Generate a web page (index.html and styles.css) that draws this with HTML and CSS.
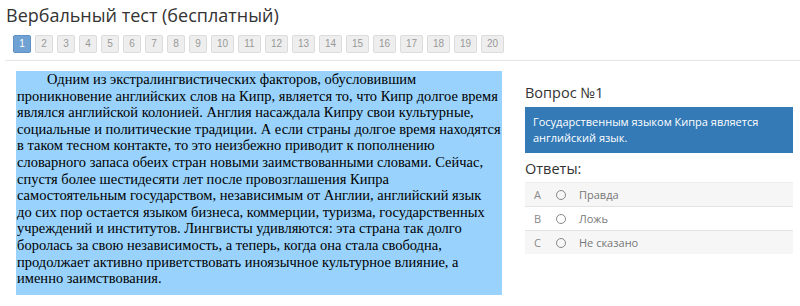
FILE: index.html
```html
<!DOCTYPE html>
<html lang="ru">
<head>
    <meta charset="UTF-8">
    <title>Вербальный тест (бесплатный)</title>
    <link rel="stylesheet" href="styles.css">
</head>
<body>
    <h1 class="title">Вербальный тест (бесплатный)</h1>

    <!-- номера вопросов -->
    <div class="pager">
        <span class="page-num current">1</span>
        <span class="page-num">2</span>
        <span class="page-num">3</span>
        <span class="page-num">4</span>
        <span class="page-num">5</span>
        <span class="page-num">6</span>
        <span class="page-num">7</span>
        <span class="page-num">8</span>
        <span class="page-num">9</span>
        <span class="page-num wide">10</span>
        <span class="page-num wide">11</span>
        <span class="page-num wide">12</span>
        <span class="page-num wide">13</span>
        <span class="page-num wide">14</span>
        <span class="page-num wide">15</span>
        <span class="page-num wide">16</span>
        <span class="page-num wide">17</span>
        <span class="page-num wide">18</span>
        <span class="page-num wide">19</span>
        <span class="page-num wide">20</span>
    </div>
    <div class="divider"></div>

    <div class="main">
        <!-- текст задания (переносы как в оригинале) -->
        <div class="passage">
            <p>Одним из экстралингвистических факторов, обусловившим<br>
            проникновение английских слов на Кипр, является то, что Кипр долгое время<br>
            являлся английской колонией. Англия насаждала Кипру свои культурные,<br>
            социальные и политические традиции. А если страны долгое время находятся<br>
            в таком тесном контакте, то это неизбежно приводит к пополнению<br>
            словарного запаса обеих стран новыми заимствованными словами. Сейчас,<br>
            спустя более шестидесяти лет после провозглашения Кипра<br>
            самостоятельным государством, независимым от Англии, английский язык<br>
            до сих пор остается языком бизнеса, коммерции, туризма, государственных<br>
            учреждений и институтов. Лингвисты удивляются: эта страна так долго<br>
            боролась за свою независимость, а теперь, когда она стала свободна,<br>
            продолжает активно приветствовать иноязычное культурное влияние, а<br>
            именно заимствования.</p>
        </div>

        <!-- вопрос и ответы -->
        <div class="side">
            <h3 class="question-title">Вопрос №1</h3>
            <div class="question-box">Государственным языком Кипра является английский язык.</div>
            <h3 class="answers-title">Ответы:</h3>
            <div class="answers">
                <label class="answer">
                    <span class="letter">A</span>
                    <span class="radio"></span>
                    <span class="answer-text">Правда</span>
                </label>
                <label class="answer">
                    <span class="letter">B</span>
                    <span class="radio"></span>
                    <span class="answer-text">Ложь</span>
                </label>
                <label class="answer">
                    <span class="letter">C</span>
                    <span class="radio"></span>
                    <span class="answer-text">Не сказано</span>
                </label>
            </div>
        </div>
    </div>
</body>
</html>
```

FILE: styles.css
```css
body {
    font-family: 'Open Sans', 'Noto Sans', sans-serif;
    background: white;
    color: #333;
    margin: 0;
}

.title {
    font-size: 18px;
    font-weight: normal;
    line-height: 24px;
    margin: 0;
    padding: 3px 0 0 6px;
}

.pager {
    display: flex;
    gap: 4px;
    margin: 8px 0 0 13px;
}

.page-num {
    box-sizing: border-box;
    width: 18px;
    height: 18px;
    border: 1px solid #dcdcdc;
    border-radius: 2px;
    background: #eee;
    color: #999;
    font-family: 'Liberation Sans', Arial, sans-serif;
    font-size: 10px;
    line-height: 16px;
    text-align: center;
}

.page-num.wide {
    width: 23px;
}

.page-num.current {
    background: #6fa1d3;
    border-color: #5f93c7;
    color: white;
}

.divider {
    border-top: 1px solid #e6e6e6;
    margin: 7px 0 0 5px;
}

.main {
    display: flex;
    margin-top: 10px;
    padding-left: 16px;
}

.passage {
    width: 486px;
    height: 224px;
    background: #99d3fd;
    flex-shrink: 0;
    overflow: hidden;
}

.passage p {
    margin: 0;
    padding: 0 0 0 1px;
    font-family: 'Liberation Serif', 'Times New Roman', serif;
    font-size: 14.5px;
    line-height: 16.6px;
    text-indent: 30px;
    color: #000;
    white-space: nowrap;
}

.side {
    width: 268px;
    margin-left: 23px;
}

.question-title {
    font-size: 14.5px;
    font-weight: normal;
    margin: 12px 0 0;
    line-height: 20px;
}

.question-box {
    background: #337ab7;
    color: white;
    font-size: 11px;
    line-height: 16px;
    padding: 7px 8px;
    margin-top: 4px;
}

.answers-title {
    font-size: 14.5px;
    font-weight: normal;
    margin: 6px 0 0;
    line-height: 20px;
}

.answers {
    margin-top: 3px;
    border-top: 1px solid #eee;
}

.answer {
    display: flex;
    align-items: center;
    height: 23px;
    border-top: 1px solid #e4e4e4;
    font-size: 11px;
    color: #777;
    background: #f6f6f6;
}

.answer:first-child {
    border-top: none;
}

.answer:nth-child(2) {
    background: white;
}

.letter {
    width: 10px;
    margin-left: 9px;
    color: #888;
}

.radio {
    box-sizing: border-box;
    width: 10px;
    height: 10px;
    border: 1px solid #888;
    border-radius: 50%;
    margin-left: 12px;
}

.answer-text {
    margin-left: 13px;
}
```
